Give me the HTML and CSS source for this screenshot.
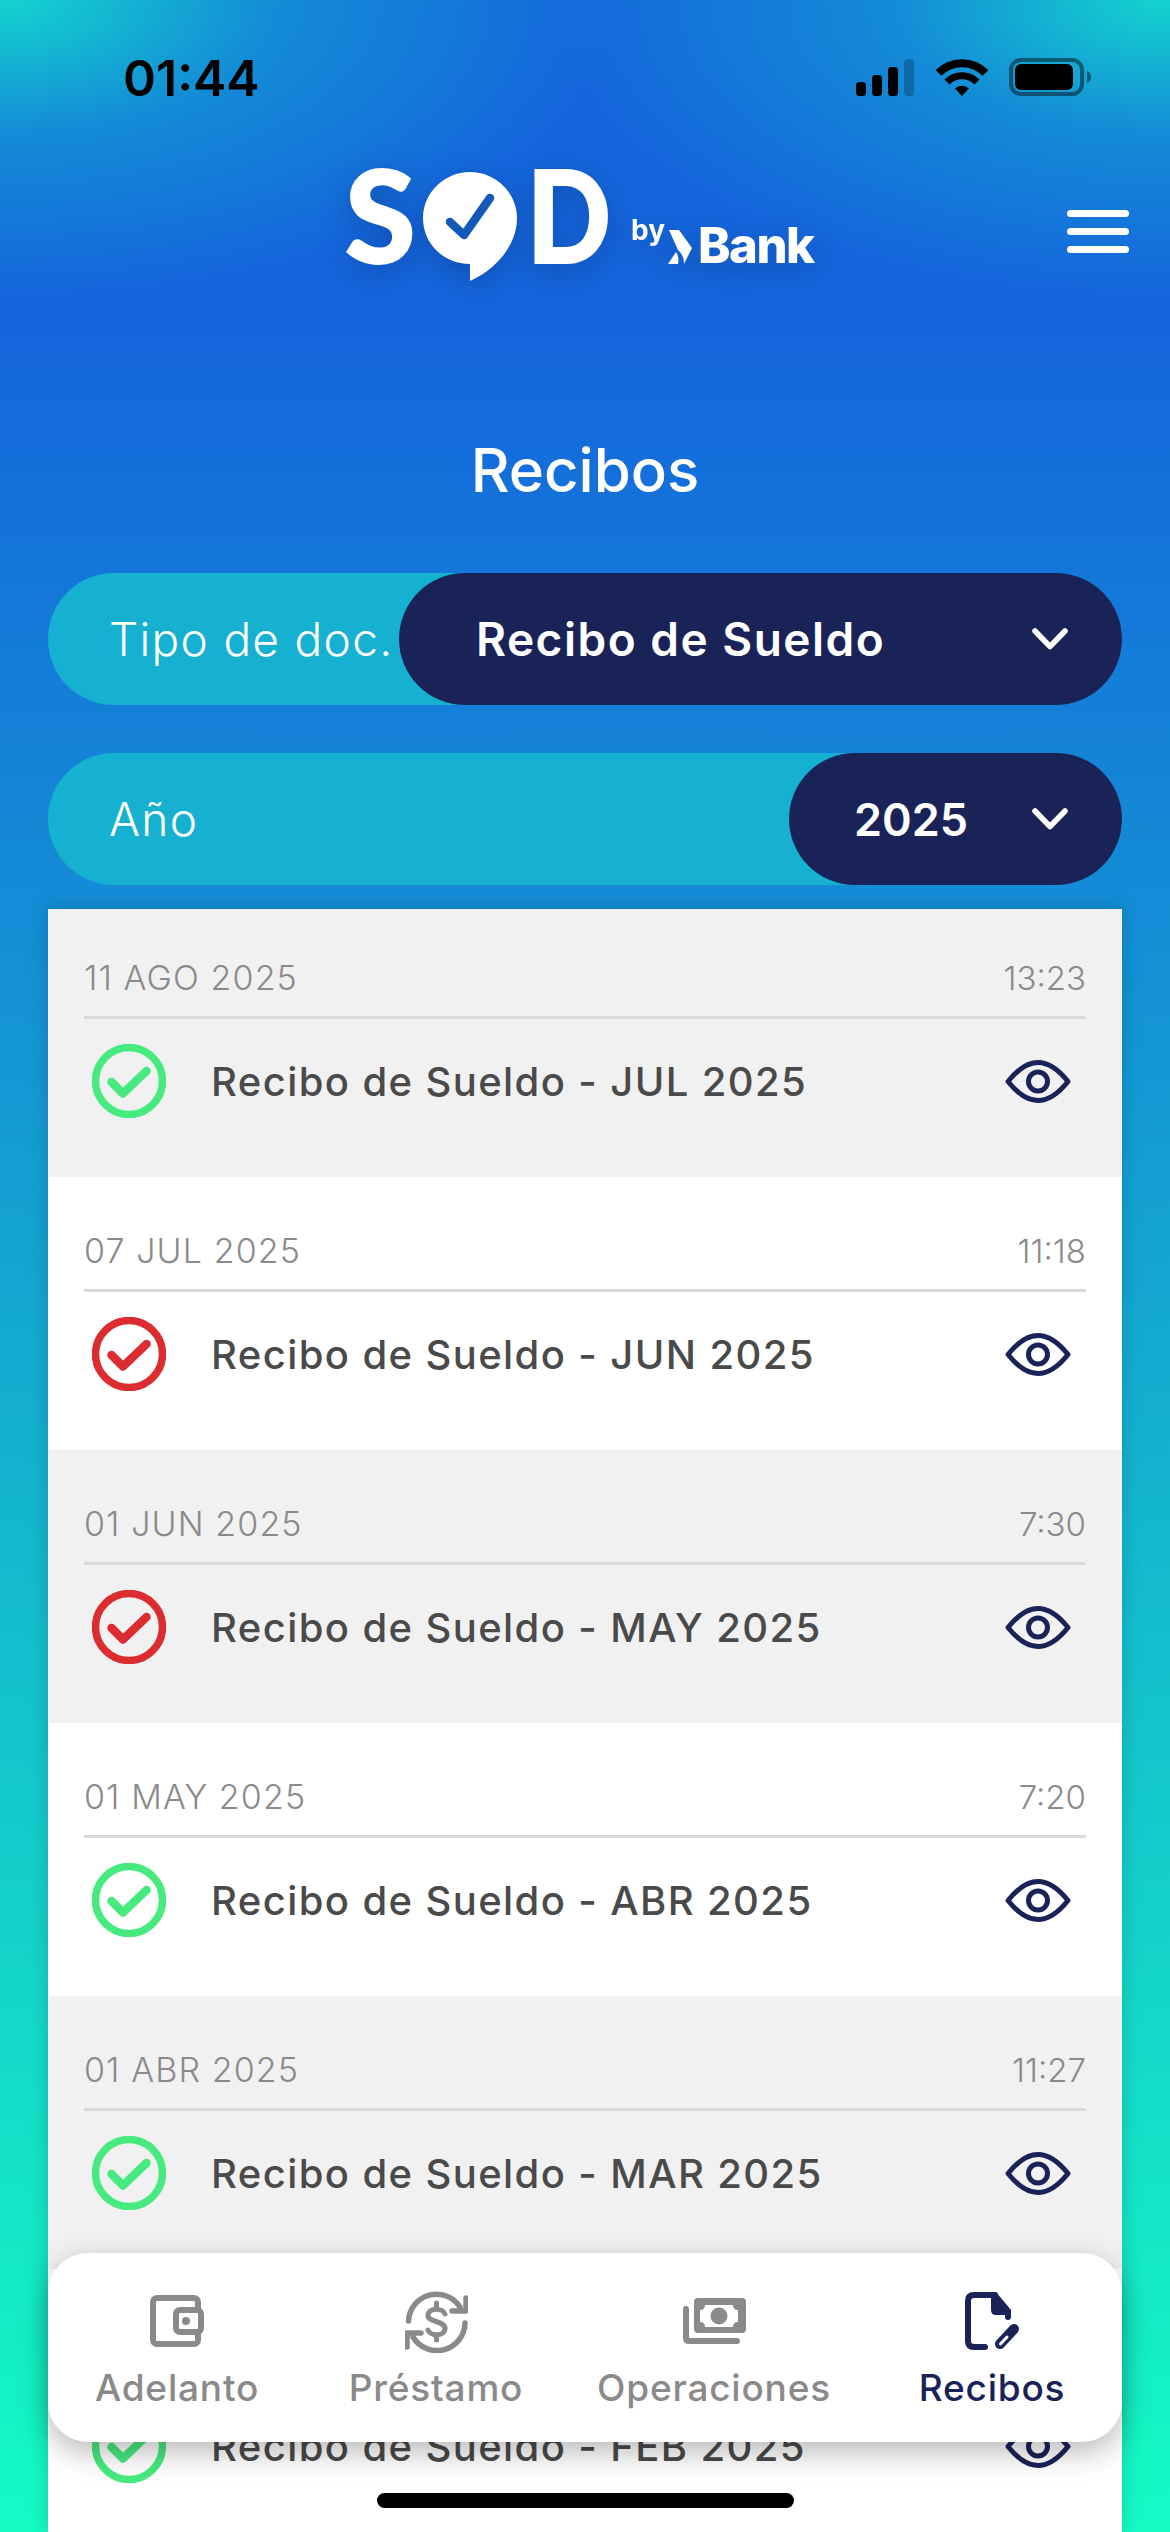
FILE: index.html
```html
<!DOCTYPE html>
<html lang="es">
<head>
<meta charset="utf-8">
<title>Recibos</title>
<link rel="stylesheet" href="styles.css">
</head>
<body>
<svg class="defs" aria-hidden="true">
  <symbol id="check" viewBox="0 0 74 74"><circle cx="37" cy="37" r="33.5" fill="none" stroke="currentColor" stroke-width="7.500"/><path d="M19.5 38 31 49.5 54.500 27" fill="none" stroke="currentColor" stroke-width="8.500" stroke-linecap="round" stroke-linejoin="round"/></symbol>
  <symbol id="eye" viewBox="0 0 66 43"><path d="M3 21.500C13 9 22 2.500 33 2.500S53 9 63 21.500C53 34 44 40.500 33 40.500S13 34 3 21.500Z" fill="none" stroke="currentColor" stroke-width="5" stroke-linejoin="round"/><circle cx="33" cy="21.500" r="9.500" fill="none" stroke="currentColor" stroke-width="5"/></symbol>
  <symbol id="chev" viewBox="0 0 36 22"><path d="M3 3 18 18.500 33 3" fill="none" stroke="currentColor" stroke-width="5.500" stroke-linecap="round" stroke-linejoin="round"/></symbol>
</svg>
<div class="screen">
  <div class="status">
    <span class="clock">01:44</span>
    <div class="status-icons">
      <svg class="signal" width="58" height="37" viewBox="0 0 58 37"><rect x="0" y="23" width="10" height="14" rx="3.500" fill="#000"/><rect x="16" y="16" width="10" height="21" rx="3.500" fill="#000"/><rect x="32" y="8" width="10" height="29" rx="3.500" fill="#000"/><rect x="48" y="0" width="10" height="37" rx="3.500" fill="#000" fill-opacity=".22"/></svg>
      <svg class="wifi" width="52" height="37" viewBox="0 0 52 37"><path d="M2.500 14A33 33 0 0 1 49.500 14" fill="none" stroke="#000" stroke-width="8"/><path d="M11 23A21 21 0 0 1 41 23" fill="none" stroke="#000" stroke-width="7"/><path d="M19 29.500A10 10 0 0 1 33 29.500L26 37Z" fill="#000"/></svg>
      <svg class="battery" width="83" height="38" viewBox="0 0 83 38"><rect x="2" y="2" width="71" height="34" rx="10" fill="none" stroke="#000" stroke-opacity=".45" stroke-width="4"/><rect x="6" y="6" width="58" height="26" rx="6" fill="#000"/><path d="M78 13C81 14 82 16.500 82 19S81 24 78 25Z" fill="#000" fill-opacity=".45"/></svg>
    </div>
  </div>

  <header class="header">
    <div class="logo">
      <span class="logo-s">S</span>
      <svg class="bubble" width="94" height="110" viewBox="0 0 94 110"><path d="M47 0C73 0 94 21 94 46C94 74 72 98 47 109V92C21 92 0 72 0 46C0 21 21 0 47 0Z" fill="#fff"/><path d="M27 50 41 63 67 26" fill="none" stroke="#1458b8" stroke-width="8.500" stroke-linecap="round" stroke-linejoin="round"/></svg>
      <span class="logo-d">D</span>
      <span class="logo-by">by</span>
      <svg class="logo-mark" width="24" height="34" viewBox="0 0 24 34"><path d="M1 0H11L24 18 16 34C16 28 14 24 10 20Z" fill="#fff"/><path d="M8 22C10 25 11 28 10 34H0Z" fill="#fff"/></svg>
      <span class="logo-bank">Bank</span>
    </div>
    <div class="burger"><i></i><i></i><i></i></div>
  </header>

  <h1 class="title">Recibos</h1>

  <div class="pill">
    <span class="pill-label">Tipo de doc.</span>
    <div class="select select-wide"><span>Recibo de Sueldo</span><svg class="chev"><use href="#chev"/></svg></div>
  </div>
  <div class="pill pill-year">
    <span class="pill-label">Año</span>
    <div class="select select-narrow"><span>2025</span><svg class="chev"><use href="#chev"/></svg></div>
  </div>

  <div class="list">
    <div class="row alt">
      <div class="meta"><span class="date">11 AGO 2025</span><span>13:23</span></div>
      <div class="doc"><svg class="state ok"><use href="#check"/></svg><span class="doc-name">Recibo de Sueldo - JUL 2025</span><svg class="eye"><use href="#eye"/></svg></div>
    </div>
    <div class="row">
      <div class="meta"><span class="date">07 JUL 2025</span><span>11:18</span></div>
      <div class="doc"><svg class="state bad"><use href="#check"/></svg><span class="doc-name">Recibo de Sueldo - JUN 2025</span><svg class="eye"><use href="#eye"/></svg></div>
    </div>
    <div class="row alt">
      <div class="meta"><span class="date">01 JUN 2025</span><span>7:30</span></div>
      <div class="doc"><svg class="state bad"><use href="#check"/></svg><span class="doc-name">Recibo de Sueldo - MAY 2025</span><svg class="eye"><use href="#eye"/></svg></div>
    </div>
    <div class="row">
      <div class="meta"><span class="date">01 MAY 2025</span><span>7:20</span></div>
      <div class="doc"><svg class="state ok"><use href="#check"/></svg><span class="doc-name">Recibo de Sueldo - ABR 2025</span><svg class="eye"><use href="#eye"/></svg></div>
    </div>
    <div class="row alt">
      <div class="meta"><span class="date">01 ABR 2025</span><span>11:27</span></div>
      <div class="doc"><svg class="state ok"><use href="#check"/></svg><span class="doc-name">Recibo de Sueldo - MAR 2025</span><svg class="eye"><use href="#eye"/></svg></div>
    </div>
    <div class="row">
      <div class="doc doc-last"><svg class="state ok"><use href="#check"/></svg><span class="doc-name">Recibo de Sueldo - FEB 2025</span><svg class="eye"><use href="#eye"/></svg></div>
    </div>
  </div>

  <nav class="tabs">
    <div class="tab">
      <div class="tab-icon"><svg width="54" height="52" viewBox="0 0 54 52"><rect x="3" y="3" width="45" height="46" rx="4" fill="none" stroke="currentColor" stroke-width="6"/><rect x="26" y="15" width="25" height="22" rx="4" fill="#fff" stroke="currentColor" stroke-width="6"/><circle cx="36" cy="26" r="4" fill="currentColor"/></svg></div>
      <span>Adelanto</span>
    </div>
    <div class="tab">
      <div class="tab-icon"><svg width="63" height="63" viewBox="0 0 63 63" fill="none" stroke="currentColor" stroke-width="5.500" stroke-linecap="round" stroke-linejoin="round"><path d="M3.500 31A28 28 0 0 1 55 17"/><path d="M61 8V21H47"/><path d="M60 33A28 28 0 0 1 8 47"/><path d="M2 57V43H16"/><path d="M40 24C38 18 24 17 23 25 22 33 41 30 40 39 39 47 25 46 23 40" stroke-width="5"/><path d="M31.500 13V17M31.500 46V50" stroke-width="5"/></svg></div>
      <span>Préstamo</span>
    </div>
    <div class="tab">
      <div class="tab-icon"><svg width="63" height="52" viewBox="0 0 63 52"><path d="M3 14V43Q3 46 6 46H54" fill="none" stroke="currentColor" stroke-width="6" stroke-linecap="round"/><rect x="11" y="3" width="52" height="35" rx="4" fill="currentColor"/><path d="M22 10H50Q50 15 55 15V27Q50 27 50 32H22Q22 27 17 27V15Q22 15 22 10Z" fill="#fff"/><circle cx="36" cy="21" r="8.500" fill="currentColor"/></svg></div>
      <span>Operaciones</span>
    </div>
    <div class="tab active">
      <div class="tab-icon"><svg width="54" height="58" viewBox="0 0 54 58"><path d="M30 3H9Q3 3 3 9V49Q3 55 9 55H20M43 25V21" fill="none" stroke="currentColor" stroke-width="6" stroke-linecap="round"/><path d="M26 0H31L46 18V23H31Q26 23 26 18Z" fill="currentColor"/><path d="M49 37 35 52" stroke="currentColor" stroke-width="10" stroke-linecap="round"/><path d="M42 45 35.500 52" stroke="#fff" stroke-width="3" stroke-linecap="round"/></svg></div>
      <span>Recibos</span>
    </div>
  </nav>
  <div class="home"></div>
</div>
</body>
</html>
```
FILE: styles.css
```css
* { box-sizing: border-box; }
html, body { margin: 0; padding: 0; }
body { width: 1170px; height: 2532px; overflow: hidden; font-family: "Inter", "Liberation Sans", sans-serif; }
.defs { width: 0; height: 0; display: block; }

.screen {
  position: relative;
  width: 1170px;
  height: 2532px;
  overflow: hidden;
  display: flex;
  flex-direction: column;
  background:
    radial-gradient(ellipse 620px 300px at 0 0, #14d4cf 0%, rgba(20, 170, 210, .55) 45%, rgba(20, 101, 220, 0) 100%),
    radial-gradient(ellipse 620px 300px at 100% 0, #14d4cf 0%, rgba(20, 170, 210, .55) 45%, rgba(20, 101, 220, 0) 100%),
    linear-gradient(180deg, #1465dc 0, #1465dc 320px, #14fbc4 100%);
}

.status { height: 160px; flex: none; padding: 58px 78px 0 123px; display: flex; justify-content: space-between; align-items: flex-start; }
.clock { margin-top: 1px; font-family: "Inter", sans-serif; font-weight: 600; font-size: 50px; line-height: 38px; color: #000; }
.status-icons { display: flex; align-items: flex-start; }
.signal { margin: 1px 22px 0 0; }
.wifi { margin: 1px 21px 0 0; }

.header { height: 130px; flex: none; padding: 12px 41px 0 345px; display: flex; justify-content: space-between; align-items: flex-start; }
.logo { display: flex; align-items: flex-end; height: 110px; color: #fff; filter: drop-shadow(0 8px 14px rgba(10, 50, 120, .4)); }
.logo-s, .logo-d { font-family: "Lato", sans-serif; font-weight: 900; font-size: 128px; line-height: 1; -webkit-text-stroke: 2px #fff; }
.logo-s { margin: 0 5px 4px 0; display: block; width: 73px; }
.bubble { margin: 0 10px 0 0; flex: none; }
.logo-d { margin-bottom: 4px; width: 82px; display: block; transform: scaleX(.86); transform-origin: left; }
.logo-by { font-weight: 700; font-size: 28px; line-height: 1; margin: 0 3px 38px 22px; }
.logo-mark { margin: 0 6px 18px 0; flex: none; }
.logo-bank { font-weight: 800; font-size: 49px; letter-spacing: -1.5px; line-height: 1; margin-bottom: 12px; }
.burger { margin-top: 38px; width: 62px; display: flex; flex-direction: column; gap: 11px; }
.burger i { display: block; height: 7px; border-radius: 4px; background: #fff; }

.title { margin: 0; padding-top: 140px; flex: none; height: 283px; text-align: center; color: #fff; font-weight: 500; font-size: 60px; line-height: 80px; }

.pill { height: 132px; flex: none; margin: 0 48px 48px; border-radius: 66px; background: #16b0d0; display: flex; justify-content: space-between; align-items: center; padding-left: 61px; color: #fff; }
.pill-year { margin-bottom: 24px; }
.pill-label { font-weight: 300; font-size: 46px; letter-spacing: 1.3px; }
.select { height: 132px; border-radius: 66px; background: #1a2358; display: flex; align-items: center; font-weight: 600; font-size: 46px; justify-content: space-between; padding-right: 54px; }
.select-wide { width: 723px; padding-left: 77px; letter-spacing: 1.5px; }
.select-narrow { width: 333px; padding-left: 65px; font-size: 45px; }
.chev { width: 36px; height: 22px; color: #fff; }

.list { flex: 1; min-height: 0; margin: 0 48px; background: #fff; overflow: hidden; box-shadow: 0 0 18px rgba(0, 0, 0, .18); }
.row { height: 273px; padding: 0 36px; background: #fff; }
.row:first-child { margin-top: -5px; }
.alt { background: #f1f1f1; }
.meta { height: 115px; padding-top: 52px; border-bottom: 3px solid #d9d9d9; display: flex; justify-content: space-between; color: #8a8a8a; font-weight: 300; font-size: 33px; line-height: 44px; }
.date { font-size: 34px; letter-spacing: 1.1px; }
.doc { height: 124px; display: flex; align-items: center; padding: 0 15px 0 8px; }
.doc-last { margin-top: 115px; }
.state { width: 74px; height: 74px; margin-right: 45px; flex: none; }
.ok { color: #47ea7e; }
.bad { color: #dd2c2f; }
.doc-name { flex: 1; font-weight: 500; font-size: 40px; letter-spacing: 1.4px; color: #4a4a4a; }
.eye { width: 66px; height: 43px; color: #1a2358; flex: none; }

.tabs { position: absolute; left: 48px; top: 2253px; width: 1074px; height: 189px; border-radius: 40px; background: #fff; box-shadow: 0 10px 30px rgba(0, 0, 0, .28); display: grid; grid-template-columns: 258px 260px 296px 260px; color: #8a8a8a; }
.tab { display: flex; flex-direction: column; align-items: center; padding-top: 35px; gap: 12px; font-weight: 500; font-size: 37px; letter-spacing: .8px; line-height: 44px; }
.tab-icon { height: 66px; display: flex; align-items: center; }
.active { color: #1a2358; }
.home { position: absolute; left: 377px; top: 2493px; width: 417px; height: 15px; border-radius: 8px; background: #000; }
```
